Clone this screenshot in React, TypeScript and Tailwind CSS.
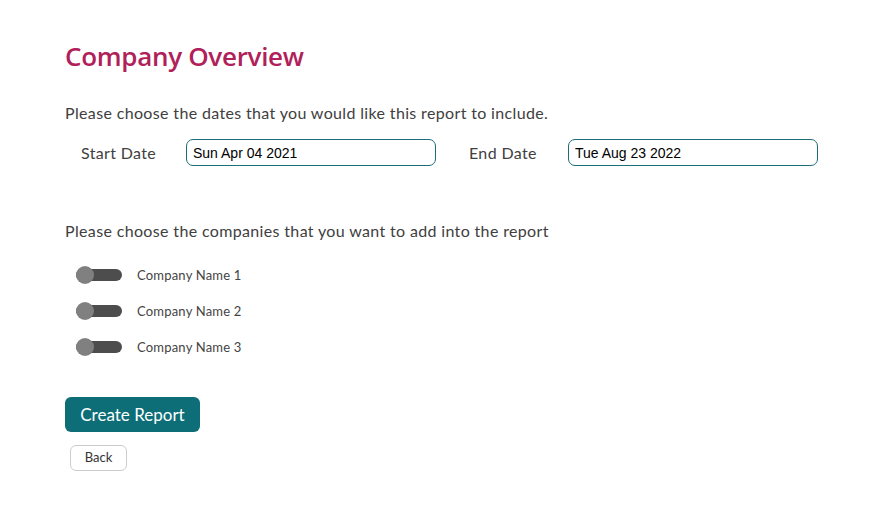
import React, { useState } from 'react';

const companies = ['Company Name 1', 'Company Name 2', 'Company Name 3'];

function Toggle({ on, onClick }: { on: boolean; onClick: () => void }) {
  return (
    <button type="button" onClick={onClick} className="relative flex h-[18px] w-[46px] items-center">
      <span className="h-[12px] w-full rounded-full bg-[#4d4d4d]"></span>
      <span
        className={`absolute top-0 h-[18px] w-[18px] rounded-full bg-[#808080] ${on ? 'left-[28px]' : 'left-0'}`}
      ></span>
    </button>
  );
}

export default function App() {
  const [selected, setSelected] = useState<boolean[]>([false, false, false]);

  return (
    <div className="min-h-screen w-full bg-white px-[65px] pt-[39px] text-[#404040] font-['Lato',sans-serif]">
      <h1 className="text-[26px] font-semibold leading-[34px] tracking-[-0.3px] text-[#b0215a] font-['Open_Sans',sans-serif]">
        Company Overview
      </h1>

      <p className="mt-[30px] text-[16px] leading-[20px] tracking-[0.35px]">
        Please choose the dates that you would like this report to include.
      </p>

      <div className="mt-[16px] flex items-center">
        <label className="ml-[16px] w-[105px] text-[16px] tracking-[0.35px]">Start Date</label>
        <input
          readOnly
          value="Sun Apr 04 2021"
          className="h-[27px] w-[250px] rounded-[7px] border border-[#1b6e76] px-[6px] text-[14px] text-black font-['Liberation_Sans',sans-serif] focus:outline-none"
        />
        <label className="ml-[33px] w-[99px] text-[16px] tracking-[0.35px]">End Date</label>
        <input
          readOnly
          value="Tue Aug 23 2022"
          className="h-[27px] w-[250px] rounded-[7px] border border-[#1b6e76] px-[6px] text-[14px] text-black font-['Liberation_Sans',sans-serif] focus:outline-none"
        />
      </div>

      <p className="mt-[55px] text-[16px] leading-[20px] tracking-[0.35px]">
        Please choose the companies that you want to add into the report
      </p>

      <div className="mt-[25px] flex flex-col gap-[18px] pl-[11px]">
        {companies.map((name, i) => (
          <div key={name} className="flex items-center gap-[15px]">
            <Toggle
              on={selected[i]}
              onClick={() => setSelected(selected.map((v, j) => (j === i ? !v : v)))}
            />
            <span className="text-[13px] leading-[18px] tracking-[0.2px] text-[#444444]">{name}</span>
          </div>
        ))}
      </div>

      <button
        type="button"
        className="mt-[41px] block h-[35px] w-[135px] rounded-[6px] bg-[#0e6e78] text-[17px] text-white"
      >
        Create Report
      </button>

      <button
        type="button"
        className="ml-[5px] mt-[13px] block h-[26px] w-[57px] rounded-[6px] border border-[#cccccc] text-[13px] text-[#333333]"
      >
        Back
      </button>
    </div>
  );
}
